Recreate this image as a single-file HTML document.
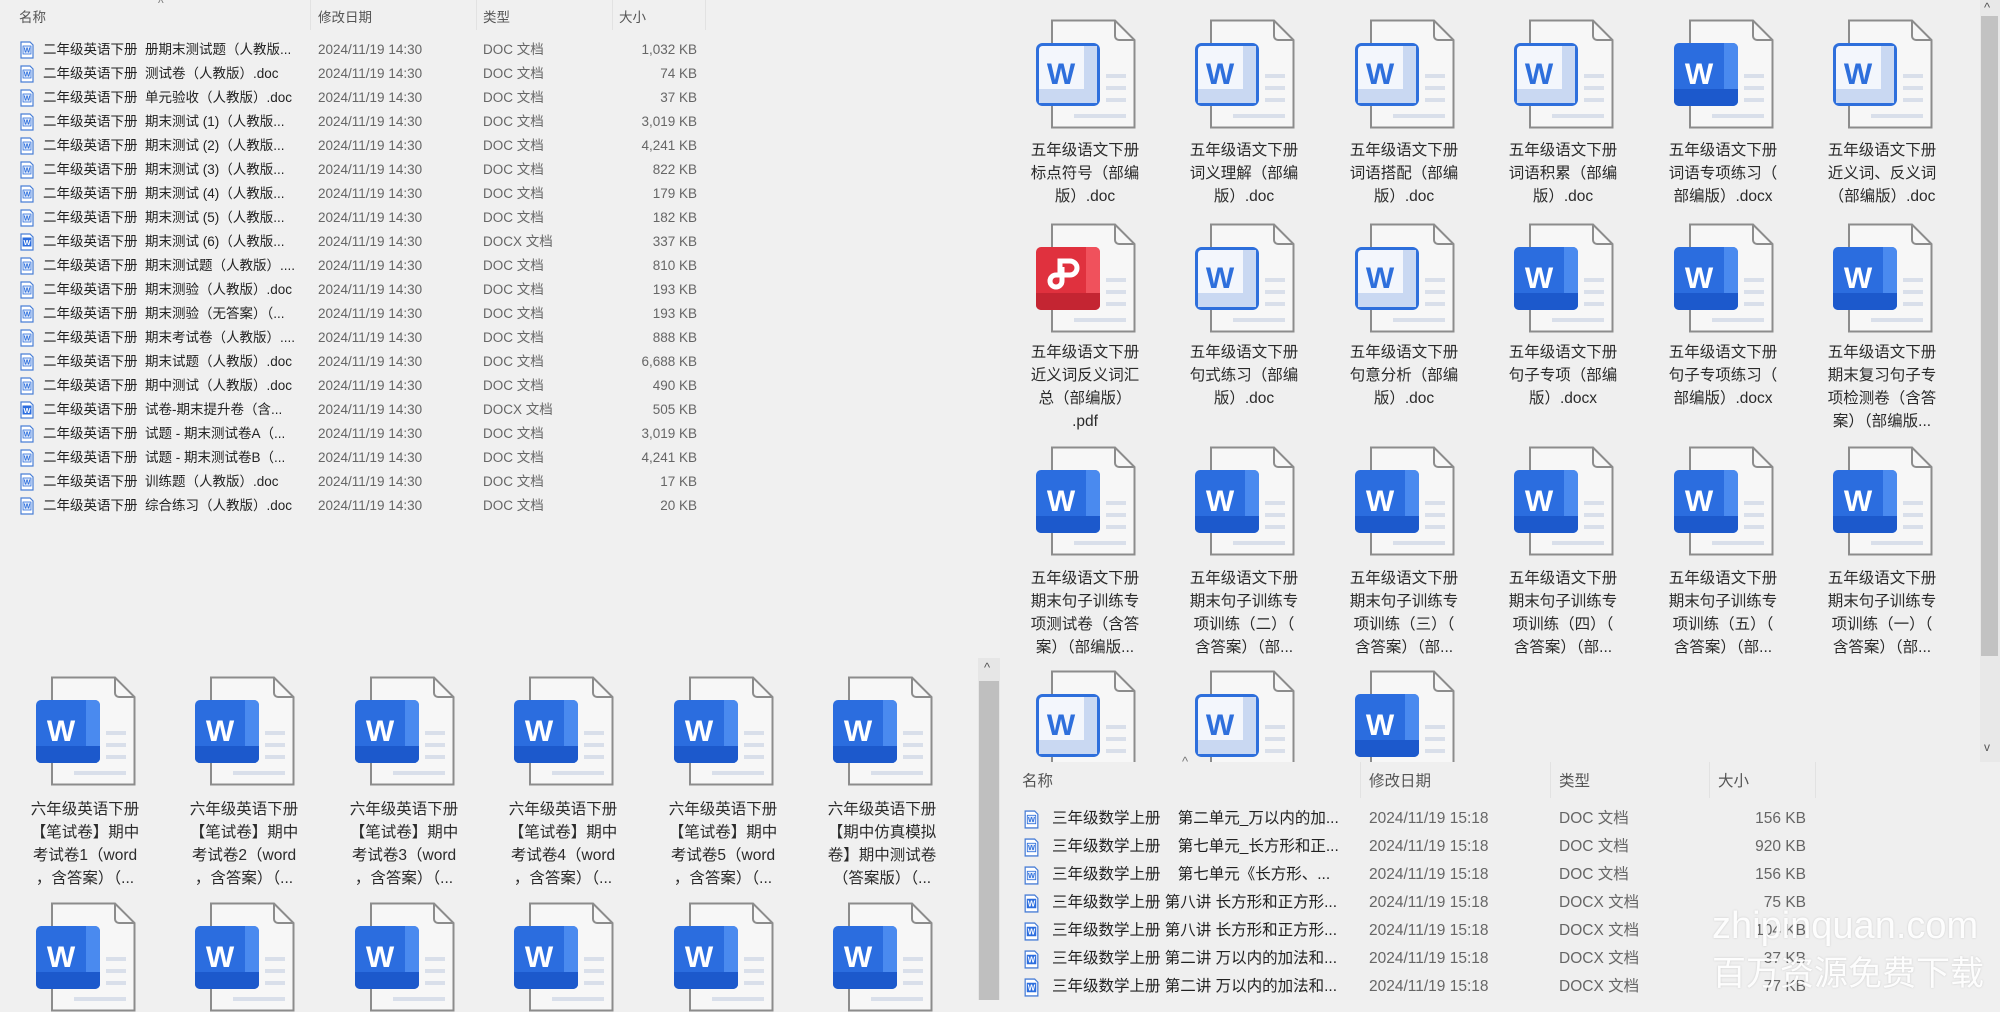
<!DOCTYPE html>
<html><head><meta charset="utf-8">
<style>
*{margin:0;padding:0;box-sizing:border-box}
body{width:2000px;height:1000px;overflow:hidden;background:#f0f0f0;font-family:"Liberation Sans","Noto Sans CJK SC",sans-serif;position:relative;color:#222}
.a{position:absolute;white-space:nowrap}
.ic{position:absolute;width:100px;height:110px}
.lb{position:absolute;width:130px;text-align:center;font-size:15.5px;line-height:23px;color:#2a2a2a;white-space:nowrap;margin-top:3px}
.hd{position:absolute;font-size:13.5px;color:#555}
.sep{position:absolute;width:1px;background:#e2e2e2}
.r1{position:absolute;height:24px;font-size:13.5px;line-height:24px;color:#222}
.r1 svg,.r2 svg{position:absolute}
.r2{position:absolute;height:28px;font-size:15.5px;line-height:28px;color:#222}
.g{color:#666}
</style></head><body>
<svg width="0" height="0" style="position:absolute">
<defs>
<symbol id="page" viewBox="0 0 100 110">
<path d="M16 1.5H79L98.5 21V108.5H16Z" fill="#f7f7f7" stroke="#8c8c8c" stroke-width="2"/>
<path d="M79 1.5V17a4 4 0 0 0 4 4H98.5" fill="none" stroke="#8c8c8c" stroke-width="2"/>
<rect x="70" y="55" width="20" height="4" fill="#d9dfea"/>
<rect x="70" y="67" width="20" height="4" fill="#d9dfea"/>
<rect x="70" y="79" width="20" height="4" fill="#d9dfea"/>
<rect x="38" y="95" width="52" height="4" fill="#d9dfea"/>
</symbol>
<symbol id="docx" viewBox="0 0 100 110">
<use href="#page"/>
<rect x="0" y="24" width="64" height="63" rx="5" fill="#2b6ddf"/>
<path d="M50 24h9a5 5 0 0 1 5 5v53a5 5 0 0 1-5 5h-9z" fill="#4a8aef"/>
<path d="M0 70h64v12a5 5 0 0 1-5 5H5a5 5 0 0 1-5-5z" fill="#1c59cc"/>
<text x="25" y="65" font-family="Liberation Sans" font-size="30" font-weight="bold" fill="#fff" text-anchor="middle">W</text>
</symbol>
<symbol id="doc" viewBox="0 0 100 110">
<use href="#page"/>
<rect x="1.5" y="25.5" width="61" height="60" rx="5" fill="#f3f6fc" stroke="#2e6fdc" stroke-width="3"/>
<rect x="48" y="27" width="13" height="57" fill="#c9d8f2"/>
<rect x="3" y="70" width="58" height="14" fill="#c9d8f2"/>
<text x="25" y="65" font-family="Liberation Sans" font-size="30" font-weight="bold" fill="#2e6fdc" text-anchor="middle">W</text>
</symbol>
<symbol id="pdf" viewBox="0 0 100 110">
<use href="#page"/>
<rect x="0" y="24" width="64" height="63" rx="5" fill="#e0313e"/>
<path d="M50 24h9a5 5 0 0 1 5 5v53a5 5 0 0 1-5 5h-9z" fill="#f0515c"/>
<path d="M0 70h64v12a5 5 0 0 1-5 5H5a5 5 0 0 1-5-5z" fill="#c42532"/>
<path d="M24 52V38h10a7 7 0 0 1 0 14H20a6 6 0 1 0 6 6V44" fill="none" stroke="#fff" stroke-width="5"/>
</symbol>
<symbol id="sdoc" viewBox="0 0 14 18">
<path d="M1 1h9l3 3v13H1z" fill="#fff" stroke="#4a7fd6" stroke-width="1.2"/>
<rect x="3" y="5" width="8" height="8" fill="#e6eefb" stroke="#2e6fdc" stroke-width=".8"/>
<text x="7" y="11.6" font-family="Liberation Sans" font-size="7" font-weight="bold" fill="#2e6fdc" text-anchor="middle">W</text>
</symbol>
<symbol id="sdocx" viewBox="0 0 14 18">
<path d="M1 1h9l3 3v13H1z" fill="#fff" stroke="#4a7fd6" stroke-width="1.2"/>
<rect x="2.5" y="4.5" width="9" height="9" fill="#2b6ddf"/>
<text x="7" y="11.8" font-family="Liberation Sans" font-size="7.5" font-weight="bold" fill="#fff" text-anchor="middle">W</text>
</symbol>
</defs></svg>

<!-- TOP-LEFT LIST -->
<div class="a" style="left:158px;top:-4px;font-size:12px;color:#777">^</div>
<div class="hd" style="left:19px;top:6px">名称</div>
<div class="hd" style="left:318px;top:6px">修改日期</div>
<div class="hd" style="left:483px;top:6px">类型</div>
<div class="hd" style="left:619px;top:6px">大小</div>
<div class="sep" style="left:310px;top:0;height:30px"></div>
<div class="sep" style="left:476px;top:0;height:30px"></div>
<div class="sep" style="left:612px;top:0;height:30px"></div>
<div class="sep" style="left:705px;top:0;height:30px"></div>

<div class="r1" style="left:0;top:38px;width:710px"><svg style="left:20px;top:3px" width="14" height="18"><use href="#sdoc"/></svg><span class="a" style="left:43px">二年级英语下册&nbsp;&nbsp;册期末测试题（人教版...</span><span class="a g" style="left:318px">2024/11/19 14:30</span><span class="a g" style="left:483px">DOC 文档</span><span class="a g" style="right:13px">1,032 KB</span></div>
<div class="r1" style="left:0;top:62px;width:710px"><svg style="left:20px;top:3px" width="14" height="18"><use href="#sdoc"/></svg><span class="a" style="left:43px">二年级英语下册&nbsp;&nbsp;测试卷（人教版）.doc</span><span class="a g" style="left:318px">2024/11/19 14:30</span><span class="a g" style="left:483px">DOC 文档</span><span class="a g" style="right:13px">74 KB</span></div>
<div class="r1" style="left:0;top:86px;width:710px"><svg style="left:20px;top:3px" width="14" height="18"><use href="#sdoc"/></svg><span class="a" style="left:43px">二年级英语下册&nbsp;&nbsp;单元验收（人教版）.doc</span><span class="a g" style="left:318px">2024/11/19 14:30</span><span class="a g" style="left:483px">DOC 文档</span><span class="a g" style="right:13px">37 KB</span></div>
<div class="r1" style="left:0;top:110px;width:710px"><svg style="left:20px;top:3px" width="14" height="18"><use href="#sdoc"/></svg><span class="a" style="left:43px">二年级英语下册&nbsp;&nbsp;期末测试 (1)（人教版...</span><span class="a g" style="left:318px">2024/11/19 14:30</span><span class="a g" style="left:483px">DOC 文档</span><span class="a g" style="right:13px">3,019 KB</span></div>
<div class="r1" style="left:0;top:134px;width:710px"><svg style="left:20px;top:3px" width="14" height="18"><use href="#sdoc"/></svg><span class="a" style="left:43px">二年级英语下册&nbsp;&nbsp;期末测试 (2)（人教版...</span><span class="a g" style="left:318px">2024/11/19 14:30</span><span class="a g" style="left:483px">DOC 文档</span><span class="a g" style="right:13px">4,241 KB</span></div>
<div class="r1" style="left:0;top:158px;width:710px"><svg style="left:20px;top:3px" width="14" height="18"><use href="#sdoc"/></svg><span class="a" style="left:43px">二年级英语下册&nbsp;&nbsp;期末测试 (3)（人教版...</span><span class="a g" style="left:318px">2024/11/19 14:30</span><span class="a g" style="left:483px">DOC 文档</span><span class="a g" style="right:13px">822 KB</span></div>
<div class="r1" style="left:0;top:182px;width:710px"><svg style="left:20px;top:3px" width="14" height="18"><use href="#sdoc"/></svg><span class="a" style="left:43px">二年级英语下册&nbsp;&nbsp;期末测试 (4)（人教版...</span><span class="a g" style="left:318px">2024/11/19 14:30</span><span class="a g" style="left:483px">DOC 文档</span><span class="a g" style="right:13px">179 KB</span></div>
<div class="r1" style="left:0;top:206px;width:710px"><svg style="left:20px;top:3px" width="14" height="18"><use href="#sdoc"/></svg><span class="a" style="left:43px">二年级英语下册&nbsp;&nbsp;期末测试 (5)（人教版...</span><span class="a g" style="left:318px">2024/11/19 14:30</span><span class="a g" style="left:483px">DOC 文档</span><span class="a g" style="right:13px">182 KB</span></div>
<div class="r1" style="left:0;top:230px;width:710px"><svg style="left:20px;top:3px" width="14" height="18"><use href="#sdocx"/></svg><span class="a" style="left:43px">二年级英语下册&nbsp;&nbsp;期末测试 (6)（人教版...</span><span class="a g" style="left:318px">2024/11/19 14:30</span><span class="a g" style="left:483px">DOCX 文档</span><span class="a g" style="right:13px">337 KB</span></div>
<div class="r1" style="left:0;top:254px;width:710px"><svg style="left:20px;top:3px" width="14" height="18"><use href="#sdoc"/></svg><span class="a" style="left:43px">二年级英语下册&nbsp;&nbsp;期末测试题（人教版）....</span><span class="a g" style="left:318px">2024/11/19 14:30</span><span class="a g" style="left:483px">DOC 文档</span><span class="a g" style="right:13px">810 KB</span></div>
<div class="r1" style="left:0;top:278px;width:710px"><svg style="left:20px;top:3px" width="14" height="18"><use href="#sdoc"/></svg><span class="a" style="left:43px">二年级英语下册&nbsp;&nbsp;期末测验（人教版）.doc</span><span class="a g" style="left:318px">2024/11/19 14:30</span><span class="a g" style="left:483px">DOC 文档</span><span class="a g" style="right:13px">193 KB</span></div>
<div class="r1" style="left:0;top:302px;width:710px"><svg style="left:20px;top:3px" width="14" height="18"><use href="#sdoc"/></svg><span class="a" style="left:43px">二年级英语下册&nbsp;&nbsp;期末测验（无答案）（...</span><span class="a g" style="left:318px">2024/11/19 14:30</span><span class="a g" style="left:483px">DOC 文档</span><span class="a g" style="right:13px">193 KB</span></div>
<div class="r1" style="left:0;top:326px;width:710px"><svg style="left:20px;top:3px" width="14" height="18"><use href="#sdoc"/></svg><span class="a" style="left:43px">二年级英语下册&nbsp;&nbsp;期末考试卷（人教版）....</span><span class="a g" style="left:318px">2024/11/19 14:30</span><span class="a g" style="left:483px">DOC 文档</span><span class="a g" style="right:13px">888 KB</span></div>
<div class="r1" style="left:0;top:350px;width:710px"><svg style="left:20px;top:3px" width="14" height="18"><use href="#sdoc"/></svg><span class="a" style="left:43px">二年级英语下册&nbsp;&nbsp;期末试题（人教版）.doc</span><span class="a g" style="left:318px">2024/11/19 14:30</span><span class="a g" style="left:483px">DOC 文档</span><span class="a g" style="right:13px">6,688 KB</span></div>
<div class="r1" style="left:0;top:374px;width:710px"><svg style="left:20px;top:3px" width="14" height="18"><use href="#sdoc"/></svg><span class="a" style="left:43px">二年级英语下册&nbsp;&nbsp;期中测试（人教版）.doc</span><span class="a g" style="left:318px">2024/11/19 14:30</span><span class="a g" style="left:483px">DOC 文档</span><span class="a g" style="right:13px">490 KB</span></div>
<div class="r1" style="left:0;top:398px;width:710px"><svg style="left:20px;top:3px" width="14" height="18"><use href="#sdocx"/></svg><span class="a" style="left:43px">二年级英语下册&nbsp;&nbsp;试卷-期末提升卷（含...</span><span class="a g" style="left:318px">2024/11/19 14:30</span><span class="a g" style="left:483px">DOCX 文档</span><span class="a g" style="right:13px">505 KB</span></div>
<div class="r1" style="left:0;top:422px;width:710px"><svg style="left:20px;top:3px" width="14" height="18"><use href="#sdoc"/></svg><span class="a" style="left:43px">二年级英语下册&nbsp;&nbsp;试题 - 期末测试卷A（...</span><span class="a g" style="left:318px">2024/11/19 14:30</span><span class="a g" style="left:483px">DOC 文档</span><span class="a g" style="right:13px">3,019 KB</span></div>
<div class="r1" style="left:0;top:446px;width:710px"><svg style="left:20px;top:3px" width="14" height="18"><use href="#sdoc"/></svg><span class="a" style="left:43px">二年级英语下册&nbsp;&nbsp;试题 - 期末测试卷B（...</span><span class="a g" style="left:318px">2024/11/19 14:30</span><span class="a g" style="left:483px">DOC 文档</span><span class="a g" style="right:13px">4,241 KB</span></div>
<div class="r1" style="left:0;top:470px;width:710px"><svg style="left:20px;top:3px" width="14" height="18"><use href="#sdoc"/></svg><span class="a" style="left:43px">二年级英语下册&nbsp;&nbsp;训练题（人教版）.doc</span><span class="a g" style="left:318px">2024/11/19 14:30</span><span class="a g" style="left:483px">DOC 文档</span><span class="a g" style="right:13px">17 KB</span></div>
<div class="r1" style="left:0;top:494px;width:710px"><svg style="left:20px;top:3px" width="14" height="18"><use href="#sdoc"/></svg><span class="a" style="left:43px">二年级英语下册&nbsp;&nbsp;综合练习（人教版）.doc</span><span class="a g" style="left:318px">2024/11/19 14:30</span><span class="a g" style="left:483px">DOC 文档</span><span class="a g" style="right:13px">20 KB</span></div>

<!-- BOTTOM-LEFT ICONS -->
<svg class="ic" style="left:36px;top:676px"><use href="#docx"/></svg>
<svg class="ic" style="left:195px;top:676px"><use href="#docx"/></svg>
<svg class="ic" style="left:355px;top:676px"><use href="#docx"/></svg>
<svg class="ic" style="left:514px;top:676px"><use href="#docx"/></svg>
<svg class="ic" style="left:674px;top:676px"><use href="#docx"/></svg>
<svg class="ic" style="left:833px;top:676px"><use href="#docx"/></svg>
<div class="lb" style="left:20px;top:795px">六年级英语下册<br>【笔试卷】期中<br>考试卷1（word<br>，含答案）（...</div>
<div class="lb" style="left:179px;top:795px">六年级英语下册<br>【笔试卷】期中<br>考试卷2（word<br>，含答案）（...</div>
<div class="lb" style="left:339px;top:795px">六年级英语下册<br>【笔试卷】期中<br>考试卷3（word<br>，含答案）（...</div>
<div class="lb" style="left:498px;top:795px">六年级英语下册<br>【笔试卷】期中<br>考试卷4（word<br>，含答案）（...</div>
<div class="lb" style="left:658px;top:795px">六年级英语下册<br>【笔试卷】期中<br>考试卷5（word<br>，含答案）（...</div>
<div class="lb" style="left:817px;top:795px">六年级英语下册<br>【期中仿真模拟<br>卷】期中测试卷<br>（答案版）（...</div>
<svg class="ic" style="left:36px;top:902px"><use href="#docx"/></svg>
<svg class="ic" style="left:195px;top:902px"><use href="#docx"/></svg>
<svg class="ic" style="left:355px;top:902px"><use href="#docx"/></svg>
<svg class="ic" style="left:514px;top:902px"><use href="#docx"/></svg>
<svg class="ic" style="left:674px;top:902px"><use href="#docx"/></svg>
<svg class="ic" style="left:833px;top:902px"><use href="#docx"/></svg>
<div class="a" style="left:978px;top:658px;width:22px;height:342px;background:#e6e6e6"></div>
<div class="a" style="left:979px;top:681px;width:20px;height:319px;background:#bfbfbf"></div>
<div class="a" style="left:984px;top:660px;font-size:13px;color:#555">^</div>

<!-- TOP-RIGHT ICONS -->
<div class="a" style="left:1000px;top:0;width:1000px;height:762px;background:#efefef;overflow:hidden">
<svg class="ic" style="left:36px;top:19px"><use href="#doc"/></svg>
<svg class="ic" style="left:195px;top:19px"><use href="#doc"/></svg>
<svg class="ic" style="left:355px;top:19px"><use href="#doc"/></svg>
<svg class="ic" style="left:514px;top:19px"><use href="#doc"/></svg>
<svg class="ic" style="left:674px;top:19px"><use href="#docx"/></svg>
<svg class="ic" style="left:833px;top:19px"><use href="#doc"/></svg>
<div class="lb" style="left:20px;top:136px">五年级语文下册<br>标点符号（部编<br>版）.doc</div>
<div class="lb" style="left:179px;top:136px">五年级语文下册<br>词义理解（部编<br>版）.doc</div>
<div class="lb" style="left:339px;top:136px">五年级语文下册<br>词语搭配（部编<br>版）.doc</div>
<div class="lb" style="left:498px;top:136px">五年级语文下册<br>词语积累（部编<br>版）.doc</div>
<div class="lb" style="left:658px;top:136px">五年级语文下册<br>词语专项练习（<br>部编版）.docx</div>
<div class="lb" style="left:817px;top:136px">五年级语文下册<br>近义词、反义词<br>（部编版）.doc</div>

<svg class="ic" style="left:36px;top:223px"><use href="#pdf"/></svg>
<svg class="ic" style="left:195px;top:223px"><use href="#doc"/></svg>
<svg class="ic" style="left:355px;top:223px"><use href="#doc"/></svg>
<svg class="ic" style="left:514px;top:223px"><use href="#docx"/></svg>
<svg class="ic" style="left:674px;top:223px"><use href="#docx"/></svg>
<svg class="ic" style="left:833px;top:223px"><use href="#docx"/></svg>
<div class="lb" style="left:20px;top:338px">五年级语文下册<br>近义词反义词汇<br>总（部编版）<br>.pdf</div>
<div class="lb" style="left:179px;top:338px">五年级语文下册<br>句式练习（部编<br>版）.doc</div>
<div class="lb" style="left:339px;top:338px">五年级语文下册<br>句意分析（部编<br>版）.doc</div>
<div class="lb" style="left:498px;top:338px">五年级语文下册<br>句子专项（部编<br>版）.docx</div>
<div class="lb" style="left:658px;top:338px">五年级语文下册<br>句子专项练习（<br>部编版）.docx</div>
<div class="lb" style="left:817px;top:338px">五年级语文下册<br>期末复习句子专<br>项检测卷（含答<br>案）（部编版...</div>

<svg class="ic" style="left:36px;top:446px"><use href="#docx"/></svg>
<svg class="ic" style="left:195px;top:446px"><use href="#docx"/></svg>
<svg class="ic" style="left:355px;top:446px"><use href="#docx"/></svg>
<svg class="ic" style="left:514px;top:446px"><use href="#docx"/></svg>
<svg class="ic" style="left:674px;top:446px"><use href="#docx"/></svg>
<svg class="ic" style="left:833px;top:446px"><use href="#docx"/></svg>
<div class="lb" style="left:20px;top:564px">五年级语文下册<br>期末句子训练专<br>项测试卷（含答<br>案）（部编版...</div>
<div class="lb" style="left:179px;top:564px">五年级语文下册<br>期末句子训练专<br>项训练（二）（<br>含答案）（部...</div>
<div class="lb" style="left:339px;top:564px">五年级语文下册<br>期末句子训练专<br>项训练（三）（<br>含答案）（部...</div>
<div class="lb" style="left:498px;top:564px">五年级语文下册<br>期末句子训练专<br>项训练（四）（<br>含答案）（部...</div>
<div class="lb" style="left:658px;top:564px">五年级语文下册<br>期末句子训练专<br>项训练（五）（<br>含答案）（部...</div>
<div class="lb" style="left:817px;top:564px">五年级语文下册<br>期末句子训练专<br>项训练（一）（<br>含答案）（部...</div>

<svg class="ic" style="left:36px;top:670px"><use href="#doc"/></svg>
<svg class="ic" style="left:195px;top:670px"><use href="#doc"/></svg>
<svg class="ic" style="left:355px;top:670px"><use href="#docx"/></svg>

<div class="a" style="left:980px;top:0;width:20px;height:762px;background:#e8e8e8"></div>
<div class="a" style="left:981px;top:16px;width:17px;height:640px;background:#c2c2c2"></div>
<div class="a" style="left:984px;top:0;font-size:13px;color:#555">^</div>
<div class="a" style="left:984px;top:740px;font-size:12px;color:#555">v</div>
</div>

<!-- BOTTOM-RIGHT LIST -->
<div class="a" style="left:1000px;top:762px;width:1000px;height:238px;background:#efefef"></div>
<div class="a" style="left:1182px;top:754px;font-size:13px;color:#777">^</div>
<div class="hd" style="left:1022px;top:769px;font-size:15.5px">名称</div>
<div class="hd" style="left:1369px;top:769px;font-size:15.5px">修改日期</div>
<div class="hd" style="left:1559px;top:769px;font-size:15.5px">类型</div>
<div class="hd" style="left:1718px;top:769px;font-size:15.5px">大小</div>
<div class="sep" style="left:1360px;top:762px;height:36px"></div>
<div class="sep" style="left:1550px;top:762px;height:36px"></div>
<div class="sep" style="left:1709px;top:762px;height:36px"></div>
<div class="sep" style="left:1815px;top:762px;height:36px"></div>

<div class="r2" style="left:1000px;top:805px;width:810px"><svg style="left:24px;top:5px" width="15" height="19"><use href="#sdoc"/></svg><span class="a" style="left:52px">三年级数学上册&nbsp;&nbsp;&nbsp;&nbsp;第二单元_万以内的加...</span><span class="a g" style="left:369px">2024/11/19 15:18</span><span class="a g" style="left:559px">DOC 文档</span><span class="a g" style="right:4px">156 KB</span></div>
<div class="r2" style="left:1000px;top:833px;width:810px"><svg style="left:24px;top:5px" width="15" height="19"><use href="#sdoc"/></svg><span class="a" style="left:52px">三年级数学上册&nbsp;&nbsp;&nbsp;&nbsp;第七单元_长方形和正...</span><span class="a g" style="left:369px">2024/11/19 15:18</span><span class="a g" style="left:559px">DOC 文档</span><span class="a g" style="right:4px">920 KB</span></div>
<div class="r2" style="left:1000px;top:861px;width:810px"><svg style="left:24px;top:5px" width="15" height="19"><use href="#sdoc"/></svg><span class="a" style="left:52px">三年级数学上册&nbsp;&nbsp;&nbsp;&nbsp;第七单元《长方形、...</span><span class="a g" style="left:369px">2024/11/19 15:18</span><span class="a g" style="left:559px">DOC 文档</span><span class="a g" style="right:4px">156 KB</span></div>
<div class="r2" style="left:1000px;top:889px;width:810px"><svg style="left:24px;top:5px" width="15" height="19"><use href="#sdocx"/></svg><span class="a" style="left:52px">三年级数学上册&nbsp;第八讲 长方形和正方形...</span><span class="a g" style="left:369px">2024/11/19 15:18</span><span class="a g" style="left:559px">DOCX 文档</span><span class="a g" style="right:4px">75 KB</span></div>
<div class="r2" style="left:1000px;top:917px;width:810px"><svg style="left:24px;top:5px" width="15" height="19"><use href="#sdocx"/></svg><span class="a" style="left:52px">三年级数学上册&nbsp;第八讲 长方形和正方形...</span><span class="a g" style="left:369px">2024/11/19 15:18</span><span class="a g" style="left:559px">DOCX 文档</span><span class="a g" style="right:4px">104 KB</span></div>
<div class="r2" style="left:1000px;top:945px;width:810px"><svg style="left:24px;top:5px" width="15" height="19"><use href="#sdocx"/></svg><span class="a" style="left:52px">三年级数学上册&nbsp;第二讲 万以内的加法和...</span><span class="a g" style="left:369px">2024/11/19 15:18</span><span class="a g" style="left:559px">DOCX 文档</span><span class="a g" style="right:4px">37 KB</span></div>
<div class="r2" style="left:1000px;top:973px;width:810px"><svg style="left:24px;top:5px" width="15" height="19"><use href="#sdocx"/></svg><span class="a" style="left:52px">三年级数学上册&nbsp;第二讲 万以内的加法和...</span><span class="a g" style="left:369px">2024/11/19 15:18</span><span class="a g" style="left:559px">DOCX 文档</span><span class="a g" style="right:4px">77 KB</span></div>

<!-- WATERMARK -->
<div class="a" style="left:1712px;top:902px;font-size:38px;line-height:48px;color:rgba(255,255,255,.95);text-shadow:0 0 2px rgba(0,0,0,.15)">zhipinquan.com</div>
<div class="a" style="left:1712px;top:953px;font-size:34px;line-height:42px;color:rgba(255,255,255,.95);text-shadow:0 0 2px rgba(0,0,0,.15)">百万资源免费下载</div>
</body></html>
